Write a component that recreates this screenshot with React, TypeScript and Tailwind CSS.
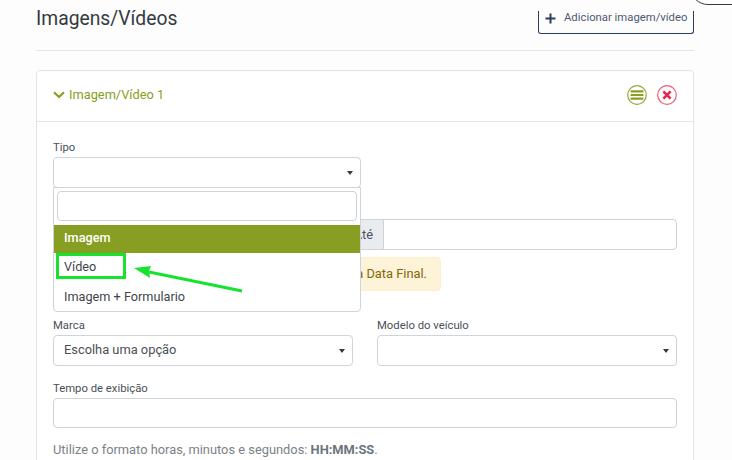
import React from "react";

const Caret = () => (
  <svg width="6" height="4" viewBox="0 0 6 4" className="block">
    <path d="M0 0h6L3 4z" fill="#343a40" />
  </svg>
);

const Label = ({ children }: { children: React.ReactNode }) => (
  <div className="text-[11.3px] leading-[18px] text-[#495057] h-[18px]">{children}</div>
);

const SelectBox = ({ children }: { children?: React.ReactNode }) => (
  <div className="h-[31px] border border-[#ced4da] rounded-[4px] bg-white flex items-center justify-between pl-[10px] pr-[7px] text-[12.85px] text-[#495057]">
    <span className="mt-[-2px]">{children}</span>
    <Caret />
  </div>
);

export default function App() {
  return (
    <div
      className="relative w-[732px] h-[460px] overflow-hidden bg-[#fdfdfd] pl-[36px] pr-[38px]"
      style={{ fontFamily: "Roboto, sans-serif" }}
    >
      <div className="absolute left-[690px] top-[-36px] w-[70px] h-[41px] rounded-[18px] border border-[#343a40] bg-white" />

      <div className="flex items-start justify-between h-[50px]">
        <h1 className="text-[19.3px] leading-[24px] mt-[7px] text-[#343a40] font-normal whitespace-nowrap">Imagens/Vídeos</h1>
        <div className="mt-[11px] h-[23px] w-[156px] border border-t-0 border-[#2c3e5d] rounded-b-[3px] flex items-center pl-[6px] pb-[7px] text-[11.3px] text-[#4d5a70] whitespace-nowrap">
          <svg width="11" height="11" viewBox="0 0 11 11" className="mr-[8px] shrink-0">
            <path d="M5.5 0.5v10M0.5 5.5h10" stroke="#2c3e5d" strokeWidth="2" />
          </svg>
          Adicionar imagem/vídeo
        </div>
      </div>
      <div className="h-px bg-[#e4e5e6]" />

      <div className="mt-[19px] border border-[#e2e3e4] rounded-[4px] bg-white h-[500px]">
        <div className="h-[51px] border-b border-[#e2e3e4] flex items-center justify-between pl-[16px] pr-[16px]">
          <div className="flex items-center text-[12.8px] text-[#86a021] mt-[-3px]">
            <svg width="12" height="8" viewBox="0 0 12 8" className="mr-[4px]">
              <path d="M1 1.2l5 4.8 5-4.8" stroke="#86a021" strokeWidth="2.2" fill="none" />
            </svg>
            Imagem/Vídeo 1
          </div>
          <div className="flex items-center gap-[10px] mt-[-3px]">
            <svg width="20" height="20" viewBox="0 0 20 20">
              <circle cx="10" cy="10" r="9.3" fill="#fff" stroke="#93a832" strokeWidth="1.2" />
              <path d="M3.6 6.4h12.8M3.6 10h12.8M3.6 13.6h12.8" stroke="#86a021" strokeWidth="2.1" />
            </svg>
            <svg width="20" height="20" viewBox="0 0 20 20">
              <circle cx="10" cy="10" r="9.3" fill="#fff" stroke="#ee5a75" strokeWidth="1.2" />
              <path d="M6.4 6.4l7.2 7.2M13.6 6.4l-7.2 7.2" stroke="#e8264b" strokeWidth="2.7" />
            </svg>
          </div>
        </div>

        <div className="relative px-[16px] pt-[17px]">
          <div className="w-[308px]">
            <Label>Tipo</Label>
            <SelectBox />
          </div>

          <div className="mt-[31px] h-[31px] flex border border-[#ced4da] rounded-[4px] bg-white">
            <div className="w-[330px] bg-[#e9ecef] border-r border-[#ced4da] rounded-l-[4px] flex items-center justify-end pr-[10px] text-[12.85px] text-[#495057]">
              Até
            </div>
          </div>

          <div className="mt-[7px] w-[388px] h-[34px] bg-[#fdf3d8] border border-[#fcefc9] rounded-[4px] flex items-center justify-end pr-[13px] text-[12.85px] text-[#856404] whitespace-nowrap">
            A Data Inicial deve ser menor que a Data Final.
          </div>

          <div className="mt-[26px] grid grid-cols-[300px_300px] gap-x-[24px]">
            <div>
              <Label>Marca</Label>
              <SelectBox>Escolha uma opção</SelectBox>
            </div>
            <div>
              <Label>Modelo do veículo</Label>
              <SelectBox />
            </div>
          </div>

          <div className="mt-[14px]">
            <Label>Tempo de exibição</Label>
            <div className="h-[30px] border border-[#ced4da] rounded-[4px] bg-white" />
          </div>

          <p className="mt-[13px] text-[12.85px] leading-[18px] text-[#7a8288]">
            Utilize o formato horas, minutos e segundos: <b className="font-bold text-[#6c757d]">HH:MM:SS</b>.
          </p>

          <div className="absolute left-[16px] top-[65px] w-[308px] h-[125px] bg-white border border-[#ced4da] rounded-b-[4px]">
            <div className="px-[3px] pt-[3px] pb-[4px]">
              <div className="h-[30px] border border-[#ced4da] rounded-[4px]" />
            </div>
            <div className="h-[28px] bg-[#879e22] text-white font-medium text-[12.7px] flex items-center pl-[10px] pb-[2px]">Imagem</div>
            <div className="h-[29px] text-[12.7px] text-[#3f464c] flex items-center pl-[10px] pb-[2px]">Vídeo</div>
            <div className="h-[29px] text-[12.7px] text-[#3f464c] flex items-center pl-[10px]">Imagem + Formulario</div>
            <div className="absolute left-[2px] top-[65px] w-[70px] h-[26px] border-[3px] border-[#17e32f]" />
          </div>

          <svg className="absolute left-[90px] top-[135px]" width="125" height="45" viewBox="0 0 125 45">
            <path d="M115 34L22 15" stroke="#17e32f" strokeWidth="3" />
            <path d="M7 11l17-2-2 5 1 7z" fill="#17e32f" />
          </svg>
        </div>
      </div>
    </div>
  );
}
